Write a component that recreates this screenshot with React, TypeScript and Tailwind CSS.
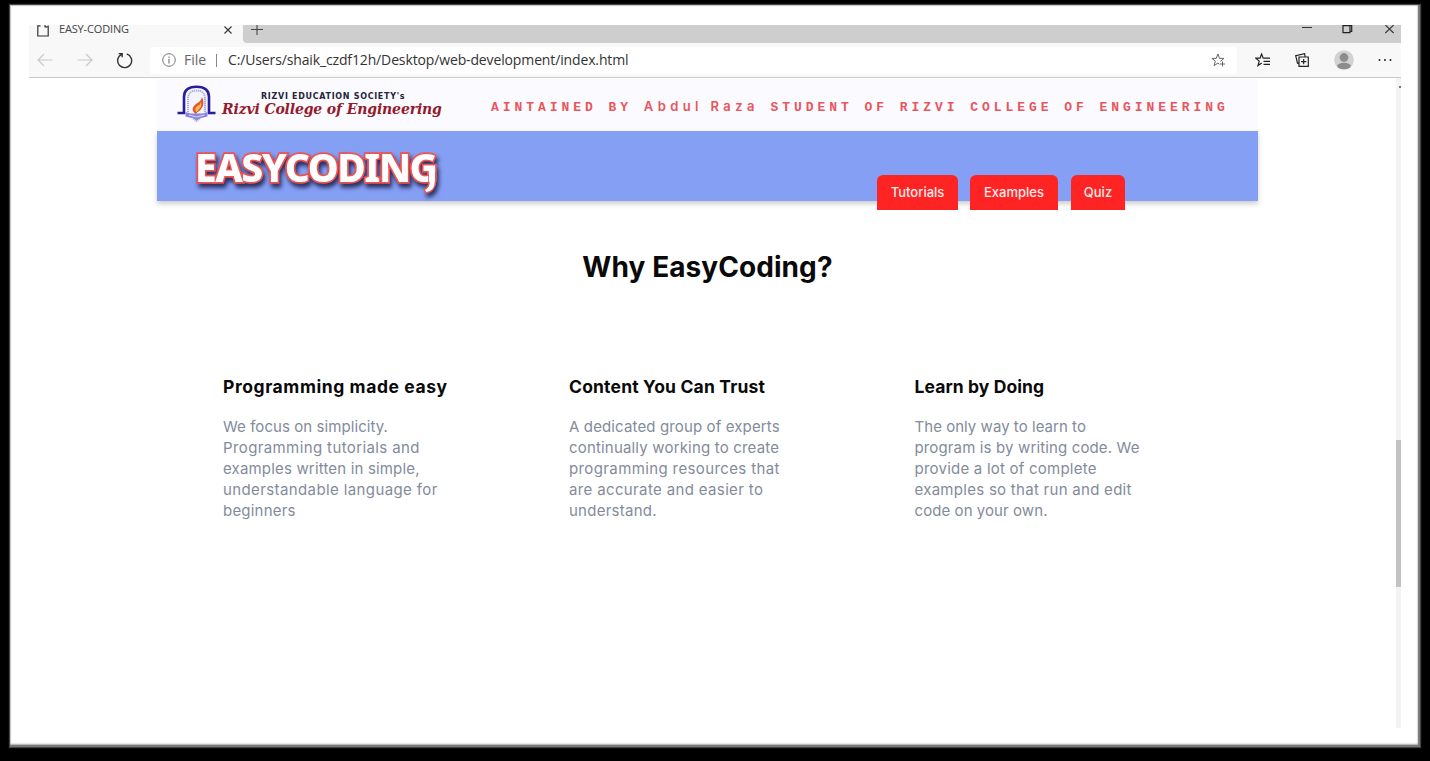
type Line = { text: string; spacing: string };

type Feature = { title: string; titleSpacing: string; lines: Line[] };

const features: Feature[] = [
  {
    title: "Programming made easy",
    titleSpacing: "tracking-[0.58px]",
    lines: [
      { text: "We focus on simplicity.", spacing: "tracking-[0.07px]" },
      { text: "Programming tutorials and", spacing: "tracking-[0.39px]" },
      { text: "examples written in simple,", spacing: "tracking-[0.17px]" },
      { text: "understandable language for", spacing: "tracking-[0.39px]" },
      { text: "beginners", spacing: "tracking-[0.21px]" },
    ],
  },
  {
    title: "Content You Can Trust",
    titleSpacing: "tracking-[0.18px]",
    lines: [
      { text: "A dedicated group of experts", spacing: "tracking-[0.13px]" },
      { text: "continually working to create", spacing: "tracking-[0.18px]" },
      { text: "programming resources that", spacing: "tracking-[0.38px]" },
      { text: "are accurate and easier to", spacing: "tracking-[0.36px]" },
      { text: "understand.", spacing: "tracking-[0.25px]" },
    ],
  },
  {
    title: "Learn by Doing",
    titleSpacing: "tracking-[0.09px]",
    lines: [
      { text: "The only way to learn to", spacing: "tracking-[0.04px]" },
      { text: "program is by writing code. We", spacing: "tracking-[0.14px]" },
      { text: "provide a lot of complete", spacing: "tracking-[0.23px]" },
      { text: "examples so that run and edit", spacing: "tracking-[0.28px]" },
      { text: "code on your own.", spacing: "tracking-[0.07px]" },
    ],
  },
];

function TabStrip() {
  return (
    <div className="flex h-[18px] bg-[#f8f8f8]">
      <div className="flex w-[214px] pl-2">
        <svg width="12" height="12" viewBox="0 0 12 12" fill="none" stroke="#333" strokeWidth="1.2">
          <path d="M3.500.8H.8v10.200h10.400V.5M8 0v1.800h2.500" />
        </svg>
        <span className="ml-[10px] mt-[-4px] h-4 w-[165px] shrink-0 font-['Open_Sans'] text-[11px] leading-4 tracking-[-0.16px] text-[#444]">
          EASY-CODING
        </span>
        <svg className="mt-[1px] shrink-0" width="8" height="8" viewBox="0 0 8 8" stroke="#333" strokeWidth="1.1">
          <path d="M.5.5l7 7M7.500.5l-7 7" />
        </svg>
      </div>
      <div className="flex flex-1 rounded-bl-[4px] bg-[#cecece] pl-2">
        <svg width="12" height="12" viewBox="0 0 12 12" stroke="#444" strokeWidth="1.1">
          <path d="M0 4.500h12M6 0v10" />
        </svg>
        <svg className="ml-auto mr-[30px]" width="10" height="10" viewBox="0 0 10 10" stroke="#333">
          <path d="M0 2.500h10" />
        </svg>
        <svg className="mr-8" width="11" height="10" viewBox="0 0 11 10" fill="none" stroke="#222" strokeWidth="1.2">
          <path d="M1 .7h7v7H1zM8.500.5h1.200v6H8" />
        </svg>
        <svg className="mr-[7px]" width="9" height="10" viewBox="0 0 9 10" stroke="#333" strokeWidth="1.1">
          <path d="M.3 0l8.400 8M8.700 0L.3 8" />
        </svg>
      </div>
    </div>
  );
}

function AddressBar() {
  return (
    <div className="flex h-[35px] items-center border-b border-[#c9c9c9] bg-[#f8f8f8]">
      <svg className="ml-2" width="16" height="14" viewBox="0 0 16 14" fill="none" stroke="#c8c8c8" strokeWidth="1.1">
        <path d="M15.500 7H1M7 1L1 7l6 6" />
      </svg>
      <svg className="ml-6" width="16" height="14" viewBox="0 0 16 14" fill="none" stroke="#c8c8c8" strokeWidth="1.1">
        <path d="M.5 7H15M9 1l6 6-6 6" />
      </svg>
      <svg className="ml-[23px]" width="17" height="17" viewBox="0 0 17 17" fill="none" stroke="#333" strokeWidth="1.4">
        <path d="M10.700 1.900A7 7 0 1 1 5.600 2.300M2.600 1.600h3.600v3.600" />
      </svg>
      <div className="ml-[17px] flex h-[27px] w-[1087px] items-center rounded-[3px] bg-white pl-[12px]">
        <svg width="14" height="14" viewBox="0 0 14 14" fill="none" stroke="#777">
          <circle cx="7" cy="7" r="6.300" />
          <path d="M7 6v4.500M7 3.500v1.200" strokeWidth="1.200" />
        </svg>
        <span className="ml-2 w-[32px] font-['Open_Sans'] text-[14px] leading-5 text-[#666]">File</span>
        <span className="h-[13px] w-px bg-[#888]" />
        <span className="ml-[11px] whitespace-nowrap font-['Open_Sans'] text-[14px] leading-5 tracking-[-0.135px] text-[#333]">
          C:/Users/shaik_czdf12h/Desktop/web-development/index.html
        </span>
        <svg className="ml-auto mr-[11px]" width="15" height="14" viewBox="0 0 15 14" fill="none" stroke="#666">
          <path d="M9.800 8.700L9.500 8.400l3.400-3H8.600L6.900 1 5.200 5.400H.9L4.300 8.100 3.100 12.600l3.800-2.500 1.600 1.100M11.500 8.500v5M9 11h5" />
        </svg>
      </div>
      <svg className="ml-[18px]" width="16" height="14" viewBox="0 0 16 14" fill="none" stroke="#222" strokeWidth="1.200">
        <path d="M8.200 5.200H15M8.500 8.300H15M8.500 11.400H15M8.200 5.200L6.600 1 5.100 5.200H.9l3.300 2.900L3 12.600l3.800-2.500" />
      </svg>
      <svg className="ml-[24px]" width="14" height="14" viewBox="0 0 14 14" fill="none" stroke="#222" strokeWidth="1.200">
        <path d="M4 4h9.300v9.300H4zM8.650 6v5.300M6 8.650h5.300M3.800 10.500l-1.300-.3L.7 2.600 9.600.7l.5 3" />
      </svg>
      <svg className="ml-[25px]" width="20" height="20" viewBox="0 0 20 20">
        <circle cx="10" cy="10" r="9.800" fill="#d4d2d0" />
        <circle cx="10" cy="7.500" r="4.400" fill="#8c8c8c" />
        <ellipse cx="10" cy="16" rx="6.800" ry="3.300" fill="#8c8c8c" />
      </svg>
      <svg className="ml-[24px]" width="14" height="4" viewBox="0 0 14 4" fill="#222">
        <circle cx="1.500" cy="2" r="1" />
        <circle cx="7" cy="2" r="1" />
        <circle cx="12.500" cy="2" r="1" />
      </svg>
    </div>
  );
}

function CollegeCrest() {
  return (
    <svg width="40" height="38" viewBox="0 0 40 38" fill="none">
      <path d="M10 27V13c0-5 3-9 10-9s10 4 10 9v14l-4 4H14z" fill="#f4f4ff" />
      <path d="M.5 28H7V12C7 5 12 1.700 19.500 1.700S32 5 32 12v16h6.500" stroke="#2a1d9c" strokeWidth="2.600" />
      <path d="M11 27V13.500C11 8.500 14 5.500 19.500 5.500s8.500 3 8.500 8V27" stroke="#a9a6e0" strokeWidth="1.800" strokeDasharray="1.300 .7" />
      <path d="M8.500 27l5 1.500h12l5-1.500v4.500l-6 1.500-5 4-5-4-6-1.500z" fill="#8a86d8" />
      <path d="M12 30l7.500 2 8-2M15 33l4.500 3 5-3" stroke="#d9d8fa" />
      <path d="M19 29c-5-3-4-7 0-10 3-2 5-3 6-7 2 5 2 9-1 12-1 2-3 2-5 5z" fill="#e4572c" />
      <path d="M19.500 27c-2-2-1-5 1-6s3-2 3.500-4c1 4-.5 6-2 7z" fill="#ffc04a" />
    </svg>
  );
}

function CollegeHeader() {
  return (
    <div className="flex h-[52px] bg-[#fafaff] pl-5 pt-[6px]">
      <CollegeCrest />
      <div className="ml-[5px] w-[269px] pt-1">
        <p className="ml-[39px] whitespace-nowrap font-['DejaVu_Sans'] text-[8px] font-bold leading-[16px] tracking-[0.69px] text-[#25253a]">
          RIZVI EDUCATION SOCIETY's
        </p>
        <p className="mt-[-5px] whitespace-nowrap font-['DejaVu_Serif'] text-[14px] font-bold italic leading-[18px] tracking-[-0.14px] text-[#941b2b]">
          Rizvi College of Engineering
        </p>
      </div>
      <p className="mt-[11px] whitespace-pre font-['Liberation_Mono'] text-[13px] font-bold leading-5 tracking-[3.95px] text-[#e9555b]">
        AINTAINED BY{" "}
        <span className="font-[Inter] font-semibold tracking-[4.4px]">Abdul Raza</span> STUDENT OF RIZVI COLLEGE OF
        ENGINEERING
      </p>
    </div>
  );
}

function NavTab({ label, size }: { label: string; size: string }) {
  return (
    <a className={`flex h-[35px] items-center justify-center rounded-t-[6px] bg-[#ff2424] font-[Inter] text-[13px] font-medium text-[#ffecec] ${size}`}>
      {label}
    </a>
  );
}

function Navbar() {
  return (
    <div className="flex h-[70px] bg-[#859ff5] shadow-[0_3px_5px_rgba(0,0,0,0.2)]">
      <div className="relative ml-[38px] w-[246px] pt-[11px] [filter:drop-shadow(2px_4px_2px_rgba(20,20,60,0.8))]">
        <span className="block whitespace-nowrap font-['Noto_Sans'] text-[39px] font-extrabold leading-[50px] tracking-[-1.45px] text-white [-webkit-text-stroke:3.500px_#ef5350] [paint-order:stroke_fill]">
          EASYCODING
        </span>
        <svg className="absolute left-[220px] top-[35px]" width="24" height="30" viewBox="0 0 24 30">
          <path d="M20.500 6v10c0 6-4 10-9.500 11l-2-3.500c4-1.500 5-3.500 5-7.500V8" fill="#fff" stroke="#ef5350" strokeWidth="1.500" />
          <path d="M14 4h6v12h-6z" fill="#fff" />
        </svg>
      </div>
      <nav className="ml-auto mr-[133px] mt-[44px] flex">
        <NavTab label="Tutorials" size="w-[81px]" />
        <NavTab label="Examples" size="ml-[12px] w-[88px]" />
        <NavTab label="Quiz" size="ml-[13px] w-[54px]" />
      </nav>
    </div>
  );
}

function FeatureColumn({ feature }: { feature: Feature }) {
  return (
    <section>
      <h2 className={`whitespace-nowrap text-[17.5px] font-bold leading-6 text-[#0a0a0a] ${feature.titleSpacing}`}>
        {feature.title}
      </h2>
      <p className="mt-[17px] text-[15px] leading-[21px] text-[#838b9b]">
        {feature.lines.map((line) => (
          <span key={line.text} className={`block whitespace-nowrap ${line.spacing}`}>
            {line.text}
          </span>
        ))}
      </p>
    </section>
  );
}

export default function App() {
  return (
    <div className="h-[761px] w-[1430px] overflow-hidden bg-black pl-[10px] pt-[5px]">
      <div className="h-[742px] w-[1410px] bg-white pl-[19px] pt-[20px] shadow-[inset_-1px_-1px_1px_1px_#777,inset_-2px_-3px_2px_0_#aaa,inset_1px_1px_1px_#ccc,0_0_1px_1px_#444]">
        <div className="flex h-[703px] w-[1372px] flex-col">
          <TabStrip />
          <AddressBar />
          <div className="flex flex-1">
            <main className="w-[1367px] pl-[128px]">
              <header className="w-[1101px] pt-px">
                <CollegeHeader />
                <Navbar />
              </header>
              <div className="w-[1101px] font-[Inter]">
                <h1 className="mt-[46px] text-center text-[28px] font-bold leading-10 tracking-[0.07px] text-[#0a0a0a]">
                  Why EasyCoding?
                </h1>
                <div className="mt-[88px] grid grid-cols-[346px_345.500px_1fr] pl-[66px]">
                  {features.map((feature) => (
                    <FeatureColumn key={feature.title} feature={feature} />
                  ))}
                </div>
              </div>
            </main>
            <div className="flex w-[5px] flex-col bg-[#f3f3f3]">
              <span className="ml-auto mt-[8px] h-[2px] w-[2px] bg-[#777]" />
              <span className="mt-[352px] h-[147px] bg-[#c3c3c3]" />
            </div>
          </div>
        </div>
      </div>
    </div>
  );
}
